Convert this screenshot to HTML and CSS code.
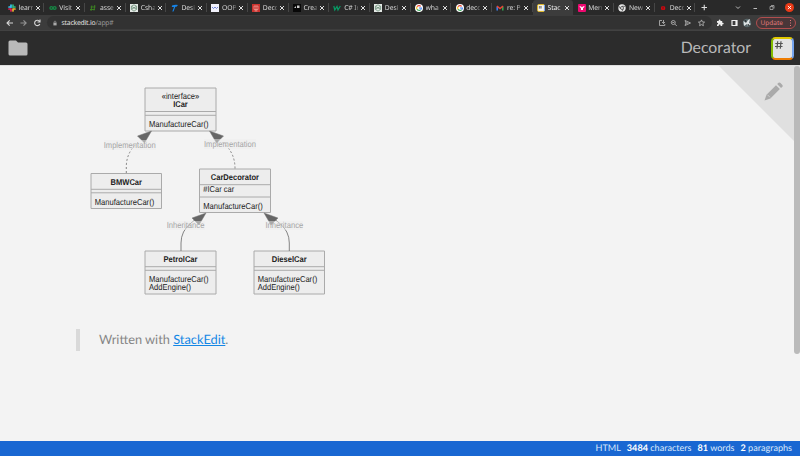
FILE: index.html
```
<!DOCTYPE html>
<html lang="en">
<head>
<meta charset="utf-8">
<title>Decorator</title>
<link rel="stylesheet" href="styles.css">
</head>
<body>
<div class="tabs">
  <div class="tab"><svg viewBox="0 0 8 8"><g stroke-width="1.7" stroke-linecap="round"><path d="M3 1v2.2M1 3h1.5" stroke="#36c5f0"/><path d="M5 1v2.3M7 3H6" stroke="#2eb67d"/><path d="M5 5.2V7M5 5h2" stroke="#ecb22e"/><path d="M3 5v2M1 5h1.5" stroke="#e01e5a"/></g></svg><span>learn</span><b></b></div>
  <div class="tab"><svg viewBox="0 0 8 8"><path d="M1 4c0-2 2.500-1.500 3 0s3 2 3 0-2.500-1.500-3 0-3 2-3 0" fill="none" stroke="#168744" stroke-width="1.300"/></svg><span>Visit</span><b></b></div>
  <div class="tab"><svg viewBox="0 0 8 8"><path d="M2.800 1.500L2 7M5.800 1L5 6.500M1.500 3h5M1 5.500h5" stroke="#3d8423" stroke-width=".9" fill="none"/></svg><span>asse</span><b></b></div>
  <div class="tab"><svg viewBox="0 0 8 8"><path fill="#e4e9e6" d="M0 0h8v8H0z"/><path d="M4 .8l2.600 1.500v3L4 7.200 1.400 5.300v-3zM1.400 2.300l5.200 3M6.600 2.300l-5.200 3" fill="none" stroke="#74947f" stroke-width=".9"/></svg><span>Csha</span><b></b></div>
  <div class="tab"><svg viewBox="0 0 8 8"><path d="M1 1.500q3-1 6-.5L5.500 2.700H4.300L2.500 7.500H1.300L3 3H.8z" fill="#1684e8"/></svg><span>Desi</span><b></b></div>
  <div class="tab"><svg viewBox="0 0 8 8"><path fill="#f1f1fb" d="M0 0h8v8H0z"/><path d="M1 3l1.500 1.500L4 3l1.500 1.500L7 3" fill="none" stroke="#5268cf" stroke-width=".8"/></svg><span>OOP</span><b></b></div>
  <div class="tab"><svg viewBox="0 0 8 8"><path fill="#c9332f" d="M0 0h8v8H0z"/><path d="M2 2h4v3.500H2zM4 2v5M2.500 7h3" fill="none" stroke="#f1b5ae" stroke-width=".6"/></svg><span>Deco</span><b></b></div>
  <div class="tab"><svg viewBox="0 0 8 8"><path fill="#080808" d="M0 0h8v8H0z"/><path d="M1 4l2-2v2zM4 1.500h2.500V4H4z" fill="#ccc"/></svg><span>Crea</span><b></b></div>
  <div class="tab"><svg viewBox="0 0 8 8"><path d="M.8 2l1 4L4 2.500 5 6l2.300-4" fill="none" stroke="#069c65" stroke-width="1.200"/></svg><span>C# In</span><b></b></div>
  <div class="tab"><svg viewBox="0 0 8 8"><path fill="#e4e9e6" d="M0 0h8v8H0z"/><path d="M4 .8l2.600 1.500v3L4 7.200 1.400 5.300v-3zM1.400 2.300l5.200 3M6.600 2.300l-5.200 3" fill="none" stroke="#74947f" stroke-width=".9"/></svg><span>Desi</span><b></b></div>
  <div class="tab"><svg viewBox="0 0 8 8"><circle cx="4" cy="4" r="4" fill="#fff"/><g fill="none" stroke-width="1.100"><path d="M2 2.800A2.400 2.400 0 0 1 5.700 2.300" stroke="#ea4335"/><path d="M2 2.800a2.400 2.400 0 0 0 0 2.500" stroke="#fbbc05"/><path d="M2 5.200a2.400 2.400 0 0 0 3.600.6" stroke="#34a853"/><path d="M4 4h2.400q0 1.200-.8 1.800" stroke="#4285f4"/></g></svg><span>wha</span><b></b></div>
  <div class="tab"><svg viewBox="0 0 8 8"><circle cx="4" cy="4" r="4" fill="#fff"/><g fill="none" stroke-width="1.100"><path d="M2 2.800A2.400 2.400 0 0 1 5.700 2.300" stroke="#ea4335"/><path d="M2 2.800a2.400 2.400 0 0 0 0 2.500" stroke="#fbbc05"/><path d="M2 5.200a2.400 2.400 0 0 0 3.600.6" stroke="#34a853"/><path d="M4 4h2.400q0 1.200-.8 1.800" stroke="#4285f4"/></g></svg><span>deco</span><b></b></div>
  <div class="tab"><svg viewBox="0 0 8 8"><g fill="none" stroke-width="1.500"><path d="M1.200 6.500V2.500" stroke="#4285f4"/><path d="M6.800 6.500V2.500" stroke="#34a853"/><path d="M1 2.200l3 2.300 3-2.300" stroke="#ea4335"/></g></svg><span>re: P</span><b></b></div>
  <div class="tab active"><svg viewBox="0 0 8 8"><rect x=".6" y=".6" width="6.800" height="6.800" rx="1" fill="#f5f5f5" stroke="#e4b91c"/><path d="M7.500 1v6" stroke="#75a5ef"/><path d="M2.500 2v2.500M4 2v2.500M1.800 2.700h3M1.800 3.900h3" stroke="#555" stroke-width=".5"/></svg><span>Stac</span><b></b></div>
  <div class="tab"><svg viewBox="0 0 8 8"><rect width="8" height="8" rx="1" fill="#ef0870"/><path d="M1.500 2q2 0 2.500 1.500Q4.500 2 6.500 2q0 1.500-1.500 2.300V6H3V4.300Q1.500 3.500 1.500 2" fill="#fff"/></svg><span>Merm</span><b></b></div>
  <div class="tab"><svg viewBox="0 0 8 8"><circle cx="4" cy="4" r="3.700" fill="#e9e9e9"/><circle cx="4" cy="4" r="1.500" fill="#e9e9e9" stroke="#444" stroke-width=".8"/><path d="M4 2.300h3.400M2.500 4.800L.8 2M5.400 4.900L3.700 7.700" stroke="#444" stroke-width=".7"/></svg><span>New</span><b></b></div>
  <div class="tab"><svg viewBox="0 0 8 8"><rect x="2" y="2.200" width="4.200" height="3.800" rx="1.300" fill="#c80c12"/><path d="M3.200 3.500h1.800M3.200 4.700h1.800" stroke="#501010" stroke-width=".4"/></svg><span>Deco</span><b></b></div>
  <svg class="window-tools" viewBox="0 0 105 15"><g fill="none" stroke="#bbb"><path d="M6.500 7.500h5.500M9.250 4.750v5.500" stroke="#ddd" stroke-width="1.100"/><path d="M41 6.500l2 2 2-2M58.500 8.500H62"/><path d="M75 6.500h3v3h-3zM76 5.500h3v3" stroke-width=".7"/></g><circle cx="94.500" cy="7.500" r="4.500" fill="#e93916"/><path d="M92.900 5.900l3.200 3.200M96.100 5.900l-3.200 3.200" stroke="#fff" stroke-width=".9"/></svg>
</div>
<div class="toolbar">
  <svg class="nav" viewBox="0 0 46 16"><g fill="none" stroke="#d6d6d6" stroke-width="1.100"><path d="M13 8H7.500M9.700 5.300L7 8l2.700 2.700"/><path d="M20.500 8H26M23.500 5.300L26.200 8l-2.700 2.700" stroke="#929292"/><path d="M39.600 6.500a2.700 2.700 0 1 0 .2 2.500M40 4.500V7h-2.500"/></g></svg>
  <div class="address">
    <svg class="lock" viewBox="0 0 5 7"><path d="M.5 3h4v3.500h-4z" fill="#aaa"/><path d="M1.300 3V1.800q1.200-1.600 2.400 0V3" fill="none" stroke="#aaa" stroke-width=".7"/></svg>
    <span class="url">stackedit.io<i>/app#</i></span>
    <svg class="page-tools" viewBox="0 0 56 12"><g fill="none" stroke="#bbb" stroke-width=".8"><path d="M8 3.500H5.500v5h5.300V7M9.500 3v3.500M8 5l1.500 1.500L11 5"/><circle cx="19.300" cy="5.500" r="2"/><path d="M20.800 7l2 2M18.300 5.500h2"/><path d="M31 3.500l5.500 2.500-5.500 2.500 1-2.500zM32 6h2"/><path d="M47.500 2.900l.9 2 2.200.2-1.700 1.400.5 2.200-1.900-1.100-1.900 1.100.5-2.200-1.700-1.400 2.200-.2z"/></g></svg>
  </div>
  <svg class="extensions" viewBox="0 0 42 16"><path d="M6 6h1.700q-.3-1.500.9-1.500T9.500 6h1.700v1.700q1.500-.2 1.500.8t-1.500 1V11H9.600q.2-1.400-.9-1.400T7.700 11H6V9.400q1.200 0 1.200-.9T6 7.700z" fill="#eee"/><path d="M21 5.500h5v5h-5zM25 5.500v5" fill="none" stroke="#eee" stroke-width="1.200"/><circle cx="36" cy="8" r="4.200" fill="#566568"/><path d="M32.500 6l2.500 2 2-3 2-1-1 4 2 1-3 2-1-2-3 2z" fill="#dce1e2"/><path d="M34 5l1 2M37 9l1 2" stroke="#252a2c"/></svg>
  <div class="update"><span>Update</span><svg viewBox="0 0 3 8"><path d="M1 1h1v1H1zM1 3.500h1v1H1zM1 6h1v1H1z" fill="#e17b7b"/></svg></div>
</div>
<header class="header">
  <svg class="folder" viewBox="0 0 20 16"><path d="M2 .5h6l2 2h8q1.500 0 1.500 1.500v10q0 1.500-1.500 1.500H2Q.5 15.500.5 14V2Q.5.500 2 .5" fill="#b9b9b9"/></svg>
  <h1>Decorator</h1>
  <svg class="logo" viewBox="0 0 23 23"><defs><clipPath id="edge"><rect width="23" height="23" rx="4.500"/></clipPath></defs><g clip-path="url(#edge)"><path d="M0 0h23L11 11z" fill="#e0c800"/><path d="M23 0v23L11 11z" fill="#76a5ef"/><path d="M0 23h23L11 11z" fill="#ee7c00"/><path d="M0 0v23l11-12z" fill="#83bc00"/></g><rect x="2" y="2" width="19" height="19" rx="2.500" fill="#e3e3e3"/><path d="M6.700 4.300L6 11.700M10 4.300l-.7 7.400M4.300 6.500h7.500M4 9.500h7.500" stroke="#555" stroke-width="1.200"/></svg>
</header>
<main class="preview">
  <svg class="diagram" viewBox="80 80 260 225">
    <g class="boxes"><path d="M145 88h71v43h-71zM145 111.500h71M145 115.300h71"/><path d="M91 173.500h70.500v35H91zM91 189.300h70.500M91 192.800h70.500"/><path d="M199.500 169h71v43.500h-71zM199.500 184.700h71M199.500 197h71"/><path d="M145 251h71v43h-71zM145 266.700h71M145 270.300h71"/><path d="M254 251h70.500v43H254zM254 266.700h70.500M254 270.300h70.500"/></g>
    <g class="links"><path class="dash" d="M126.300 173v-6q0-12 7.500-20.500l5-5M235 168.500q0-14-9-23l-4-4"/><path d="M181 251v-8q0-12 10-20l5-4M289.300 251v-8q0-12-10-20l-5-4"/></g>
    <g class="arrows"><path d="M151.500 131l-14 5 7 7zM209.500 131l14 5-7 7zM206 213l-14 5 7 7zM264 213l14 5-7 7z"/></g>
    <g class="label-bg"><path d="M104 140h52v10h-52zM204 139h52v10h-52zM167 221h38v9h-38zM265 221h38v9h-38z"/></g>
    <g class="labels"><text x="103.700" y="147.700" textLength="52" lengthAdjust="spacingAndGlyphs">Implementation</text><text x="204" y="146.500" textLength="52" lengthAdjust="spacingAndGlyphs">Implementation</text><text x="166.700" y="228.300" textLength="37.700" lengthAdjust="spacingAndGlyphs">Inheritance</text><text x="265.500" y="228.300" textLength="37.700" lengthAdjust="spacingAndGlyphs">Inheritance</text></g>
    <g class="names"><text x="173.200" y="107.200" textLength="14.600" lengthAdjust="spacingAndGlyphs">ICar</text><text x="110.500" y="184.700" textLength="31.500" lengthAdjust="spacingAndGlyphs">BMWCar</text><text x="210.800" y="180.400" textLength="48.200" lengthAdjust="spacingAndGlyphs">CarDecorator</text><text x="163.500" y="262.300" textLength="34" lengthAdjust="spacingAndGlyphs">PetrolCar</text><text x="271.700" y="262.300" textLength="35" lengthAdjust="spacingAndGlyphs">DieselCar</text></g>
    <g class="members"><text x="161.700" y="99.300" textLength="37.500" lengthAdjust="spacingAndGlyphs">«interface»</text><text x="149" y="126.700" textLength="59.500" lengthAdjust="spacingAndGlyphs">ManufactureCar()</text><text x="94.700" y="204.600" textLength="59.500" lengthAdjust="spacingAndGlyphs">ManufactureCar()</text><text x="203.300" y="192.400" textLength="31" lengthAdjust="spacingAndGlyphs">#ICar car</text><text x="203.300" y="208.500" textLength="59.500" lengthAdjust="spacingAndGlyphs">ManufactureCar()</text><text x="149" y="282.100" textLength="59.500" lengthAdjust="spacingAndGlyphs">ManufactureCar()</text><text x="149" y="289.600" textLength="42" lengthAdjust="spacingAndGlyphs">AddEngine()</text><text x="257.700" y="282.100" textLength="59.500" lengthAdjust="spacingAndGlyphs">ManufactureCar()</text><text x="257.700" y="289.600" textLength="42" lengthAdjust="spacingAndGlyphs">AddEngine()</text></g>
  </svg>
  <blockquote>Written with <a>StackEdit</a>.</blockquote>
  <div class="edit-corner"><svg viewBox="0 0 82 82"><path d="M0 0h82v82z" fill="#e0e0e0"/><path d="M46.500 35.500l2-5.800L58 20.200l3.900 3.900-9.500 9.400z" fill="#aaa"/><path d="M59.200 19l1.300-1.300q1-.7 2 .2l1.900 2q.8.900 0 1.900L63 23z" fill="#aaa"/><path d="M49.500 29.800l2.500 2.500" stroke="#e0e0e0" stroke-width=".7"/></svg></div>
  <div class="scrollbar"></div>
</main>
<footer class="status"><span>HTML</span><span><b>3484</b> characters</span><span><b>81</b> words</span><span><b>2</b> paragraphs</span></footer>
</body>
</html>
```
FILE: styles.css
```
* { box-sizing: border-box; }
body { margin: 0; height: 456px; display: flex; flex-direction: column; overflow: hidden; background: #f3f3f3; font-family: Lato, sans-serif; text-rendering: geometricPrecision; }
svg { display: block; flex: none; }
.tabs { height: 15px; flex: none; display: flex; background: #292929; padding-left: 3.7px; }
.tab { width: 40.69px; flex: none; display: flex; align-items: center; padding-left: 4.3px; position: relative; color: #d8d8d8; font: 6.8px "Noto Sans", sans-serif; }
.tab svg { width: 8px; height: 8px; margin-right: 2.7px; }
.tab span { width: 14px; overflow: hidden; white-space: nowrap; line-height: 14px; letter-spacing: -.1px; mask-image: linear-gradient(90deg, #000 70%, #0004); }
.tab b { width: 4px; height: 4px; margin-left: 3px; background: linear-gradient(45deg, transparent 40%, #ddd 40% 60%, transparent 60%), linear-gradient(-45deg, transparent 40%, #ddd 40% 60%, transparent 60%); }
.tab::after { content: ""; position: absolute; right: 0; top: 3px; width: 1px; height: 9px; background: #464646; }
.tab.active { background: #3c3c3c; border-radius: 3px 3px 0 0; color: #eee; }
.tab.active::after { display: none; }
.window-tools { width: 105px; height: 15px; }
.toolbar { height: 16px; flex: none; display: flex; align-items: center; background: #3c3c3c; border-bottom: 1px solid #424242; }
.nav { width: 46px; height: 16px; }
.address { width: 665px; height: 13px; margin-left: 1px; border-radius: 7px; background: #323232; display: flex; align-items: center; padding-left: 6px; }
.lock { width: 4px; height: 6px; }
.url { color: #e0e0e0; font: 6.8px/12px "Noto Sans", sans-serif; margin-left: 4.5px; letter-spacing: -.2px; }
.url i { font-style: normal; color: #999; }
.page-tools { width: 56px; height: 12px; margin-left: auto; margin-right: 2px; }
.extensions { width: 42px; height: 16px; margin-left: -1px; margin-right: 2.500px; }
.update { width: 40px; height: 12px; border: 1px solid #b14e4e; border-radius: 7px; display: flex; align-items: center; justify-content: space-between; padding: 0 3px 0 4px; color: #e17b7b; background: #493638; font: 6.5px/10px "Noto Sans", sans-serif; }
.update svg { width: 3px; height: 8px; }
.header { height: 34px; flex: none; background: #2c2c2c; display: flex; align-items: center; padding: 0 6px 0 8px; }
.folder { width: 20px; height: 16px; }
.header h1 { margin: 0 20px 0 auto; color: #b9b9b9; font-size: 15.8px; font-weight: 400; line-height: 24px; }
.logo { width: 23px; height: 23px; }
.preview { flex: 1; min-height: 0; position: relative; padding: 15px 0 0 76px; border-top: 1px solid #dedede; }
.diagram { width: 260px; height: 225px; margin: -1px 0 0 4px; }
.boxes { fill: #ededed; stroke: #aaa; stroke-width: 1; }
.links { fill: none; stroke: #777; stroke-width: .9; }
.dash { stroke-dasharray: 2 2; }
.arrows { fill: #666; stroke: #777; stroke-width: .5; }
.label-bg { fill: #ededed; opacity: .5; }
.labels, .names, .members { font-family: "Liberation Sans", sans-serif; font-size: 8.6px; fill: #222; }
.labels { fill: #a6a6a6; }
.names { font-weight: 700; font-size: 8.4px; }
blockquote { margin: 24px 0 0; height: 22px; border-left: 4px solid #d9d9d9; padding-left: 19px; color: #858585; font-size: 12.8px; line-height: 21px; }
blockquote a { color: #1487e5; text-decoration: underline; }
.edit-corner { position: absolute; right: 0; top: -1px; width: 82px; height: 82px; }
.edit-corner svg { width: 82px; height: 82px; }
.scrollbar { position: absolute; right: 0; top: 0; width: 6px; height: 288px; border-radius: 3px; background: #bababa; }
.status { height: 15px; flex: none; background: #1967d2; color: #d9e7fb; display: flex; justify-content: flex-end; gap: 6px; padding-right: 8px; font-size: 9.08px; line-height: 14px; }
.status b { color: #fff; }
```
